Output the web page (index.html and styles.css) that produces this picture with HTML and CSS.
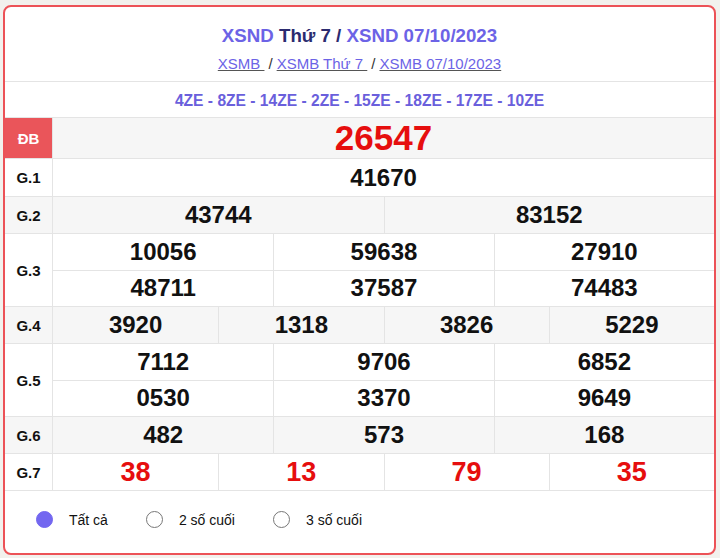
FILE: index.html
```html
<!DOCTYPE html>
<html lang="vi">
<head>
<meta charset="utf-8">
<title>XSND</title>
<link rel="stylesheet" href="styles.css">
</head>
<body>
<div class="card">
  <div class="head">
    <h2 class="title"><span class="hl">XSND</span> Thứ 7 / <span class="hl">XSND 07/10/2023</span></h2>
    <div class="links"><a href="#">XSMB </a><span class="sep">/</span><a href="#">XSMB Thứ 7 </a><span class="sep">/</span><a href="#">XSMB 07/10/2023</a></div>
  </div>
  <div class="codes">4ZE - 8ZE - 14ZE - 2ZE - 15ZE - 18ZE - 17ZE - 10ZE</div>

  <div class="row grey db">
    <div class="lab">ĐB</div>
    <div class="cells c1"><div class="cell big">26547</div></div>
  </div>
  <div class="row">
    <div class="lab">G.1</div>
    <div class="cells c1"><div class="cell">41670</div></div>
  </div>
  <div class="row grey">
    <div class="lab">G.2</div>
    <div class="cells c2"><div class="cell">43744</div><div class="cell">83152</div></div>
  </div>
  <div class="row tall">
    <div class="lab">G.3</div>
    <div class="cells c3">
      <div class="cell">10056</div><div class="cell">59638</div><div class="cell">27910</div>
      <div class="cell sub">48711</div><div class="cell sub">37587</div><div class="cell sub">74483</div>
    </div>
  </div>
  <div class="row grey">
    <div class="lab">G.4</div>
    <div class="cells c4"><div class="cell">3920</div><div class="cell">1318</div><div class="cell">3826</div><div class="cell">5229</div></div>
  </div>
  <div class="row tall">
    <div class="lab">G.5</div>
    <div class="cells c3">
      <div class="cell">7112</div><div class="cell">9706</div><div class="cell">6852</div>
      <div class="cell sub">0530</div><div class="cell sub">3370</div><div class="cell sub">9649</div>
    </div>
  </div>
  <div class="row grey">
    <div class="lab">G.6</div>
    <div class="cells c3"><div class="cell">482</div><div class="cell">573</div><div class="cell">168</div></div>
  </div>
  <div class="row last">
    <div class="lab">G.7</div>
    <div class="cells c4"><div class="cell red">38</div><div class="cell red">13</div><div class="cell red">79</div><div class="cell red">35</div></div>
  </div>

  <div class="opts">
    <label class="opt"><span class="radio on"></span>Tất cả</label>
    <label class="opt"><span class="radio"></span>2 số cuối</label>
    <label class="opt"><span class="radio"></span>3 số cuối</label>
  </div>
</div>
</body>
</html>
```

FILE: styles.css
```css
html, body {
  margin: 0;
  padding: 0;
  background: #f2f1ed;
}
body {
  font-family: "Liberation Sans", Arial, sans-serif;
  padding: 5px 4px 3px 3px;
}
.card {
  background: #fff;
  border: 2px solid #ec5257;
  border-radius: 8px;
  height: 546px;
  overflow: hidden;
}
.head {
  height: 74px;
  display: flex;
  flex-direction: column;
  align-items: center;
  border-bottom: 1px solid #e4e4e4;
}
.title {
  margin: 18px 0 0;
  font-size: 18.7px;
  font-weight: bold;
  color: #2b2b6f;
  line-height: 22px;
}
.title .hl { color: #6c63e6; }
.links {
  margin-top: 8px;
  font-size: 15px;
  color: #333;
  line-height: 18px;
}
.links .sep { margin: 0 4px; }
.links a {
  color: #6c63e6;
  text-decoration: underline;
  text-decoration-color: #555;
}
.codes {
  height: 35px;
  line-height: 37px;
  text-align: center;
  font-size: 15.6px;
  font-weight: bold;
  color: #6a5fdc;
}
.row {
  display: grid;
  grid-template-columns: 48px 1fr;
  border-top: 1px solid #e4e4e4;
  height: 36px;
}
.row.grey { background: #f6f6f6; }
.row.db { height: 40px; }
.row.db + .row { height: 37px; }
.row.tall { height: 72px; }
.row.last { border-bottom: 1px solid #e4e4e4; }
.lab {
  display: flex;
  align-items: center;
  justify-content: center;
  font-size: 15px;
  font-weight: bold;
  color: #111;
  border-right: 1px solid #e4e4e4;
}
.db .lab {
  background: #ea555a;
  color: #fff;
}
.cells { display: grid; }
.c1 { grid-template-columns: 1fr; }
.c2 { grid-template-columns: repeat(2, 1fr); }
.c3 { grid-template-columns: repeat(3, 1fr); }
.c4 { grid-template-columns: repeat(4, 1fr); }
.cell {
  display: flex;
  align-items: center;
  justify-content: center;
  font-size: 24px;
  font-weight: bold;
  color: #111;
  border-left: 1px solid #e4e4e4;
}
.cell:nth-child(1) { border-left: none; }
.c3 .cell:nth-child(4) { border-left: none; }
.cell.sub { border-top: 1px solid #e4e4e4; }
.cell.big {
  font-size: 35px;
  color: #e60e0e;
}
.cell.red {
  font-size: 27px;
  color: #e60e0e;
}
.opts {
  display: flex;
  align-items: center;
  gap: 38px;
  padding: 20px 0 0 31px;
}
.opt {
  display: flex;
  align-items: center;
  gap: 16px;
  font-size: 14px;
  color: #111;
}
.radio {
  width: 17px;
  height: 17px;
  border-radius: 50%;
  border: 1px solid #777;
  box-sizing: border-box;
  background: #fff;
}
.radio.on {
  background: #7367f0;
  border-color: #7367f0;
}
```
